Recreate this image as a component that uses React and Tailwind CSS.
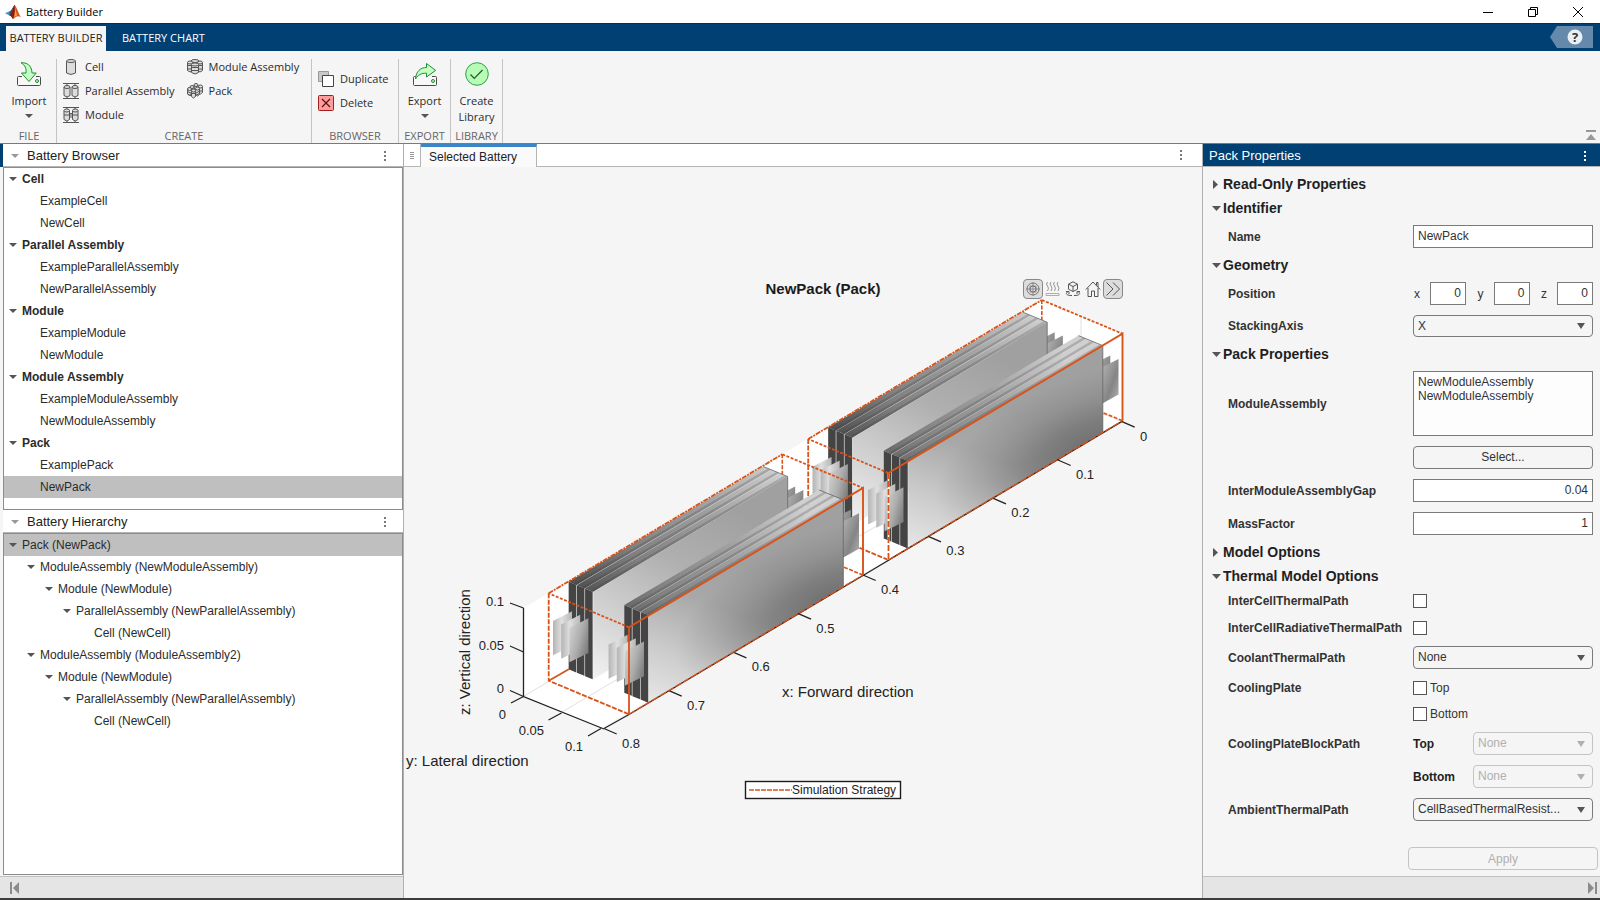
import React from 'react';

const ui = "font-['Open_Sans',sans-serif]";

/* ---------- icons ---------- */

const MatlabLogo = () => (
  <svg width="16" height="16" viewBox="0 0 16 16" aria-hidden="true">
    <path d="M0 9.2 L4.6 7.2 L6.6 9 L4.4 11.4Z" fill="#3f9bc4" />
    <path d="M4.6 7.2 C6.5 6.6 7.4 3.6 9 1.4 L8 8.2 L4.4 11.4Z" fill="#27597f" />
    <path d="M9.4 .8 C8.4 2.4 7.6 6.8 4.4 11.4 C6.2 11 7 14 8 15 C10 14.6 10.6 10.8 15.8 13 C13.4 9.6 11.4 2 9.4 .8Z" fill="#d8531c" />
    <path d="M9.4 .8 C10 4.4 10.2 8 8 15 C6.8 14 6.4 11.4 4.4 11.4 C7.4 7.6 8.2 3 9.4 .8Z" fill="#7c2018" />
    <path d="M9.6 1.2 C10.4 5 11.4 9.6 12.2 11.6 C11 11.6 10 12.6 9.2 13.6 C10.2 9.4 10.4 5 9.6 1.2Z" fill="#f5a13a" />
  </svg>
);

const Drive = () => (
  <>
    <path d="M5 14.5H1.5a1 1 0 0 0-1 1V22.500a1 1 0 0 0 1 1h21a1 1 0 0 0 1-1v-7a1 1 0 0 0-1-1H19" fill="#f8f8f8" stroke="#4a4a4a" />
    <circle cx="20" cy="19" r="1.5" fill="#b9f7b9" stroke="#2a8a3a" />
  </>
);

const ImportIcon = () => (
  <svg width="24" height="24" viewBox="0 0 24 24" fill="none" aria-hidden="true">
    <Drive />
    <path d="M4 .8C9.500 .3 14.800 3 15 11h4.200L12 19.600 4.500 11H9C9.600 6.500 8 3 4 .8Z" fill="#c3ffc3" stroke="#1f8f35" strokeLinejoin="round" />
  </svg>
);

const ExportIcon = () => (
  <svg width="24" height="24" viewBox="0 0 24 24" fill="none" aria-hidden="true">
    <Drive />
    <path d="M2.500 17C3 9.500 7.500 5.500 13.500 5.500V1.500L22.600 8.400 13.500 15V11.200C8.500 11 5 12.800 2.500 17Z" fill="#c3ffc3" stroke="#1f8f35" strokeLinejoin="round" />
  </svg>
);

const LibraryIcon = () => (
  <svg width="24" height="24" viewBox="0 0 24 24" fill="none" aria-hidden="true">
    <circle cx="12" cy="12" r="11.300" fill="#b6fbb6" stroke="#2fa048" />
    <path d="M5.500 12.500l3.800 4 8.200-8.500" stroke="#1d5c2c" strokeWidth="1.200" />
  </svg>
);

const Can = ({ x, y, w, h }) => (
  <g>
    <path d={`M${x} ${y + 1.500}v${h - 3}q${w / 2} 3 ${w} 0v-${h - 3}`} />
    <ellipse cx={x + w / 2} cy={y + 1.500} rx={w / 2} ry="1.500" />
  </g>
);

const CreateSvg = ({ children }) => (
  <svg width="16" height="16" viewBox="0 0 16 16" fill="#dcdcdc" stroke="#555" strokeWidth="1" aria-hidden="true">
    {children}
  </svg>
);

const CellIcon = () => <CreateSvg><Can x={3.5} y={0.5} w={9} h={15} /></CreateSvg>;
const ParallelIcon = () => (
  <CreateSvg>
    <path d="M0 .5h16M0 15.500h16M4 .5v2M12 .5v2M4 13v2M12 13v2" />
    <Can x={1} y={2.5} w={6} h={11.5} /><Can x={9} y={2.5} w={6} h={11.5} />
  </CreateSvg>
);
const ModuleIcon = () => (
  <CreateSvg>
    <path d="M0 .5h16M0 15.500h16M4 .5v2M12 .5v2M4 13v2M12 13v2" />
    <Can x={1} y={2} w={5.5} h={12} /><Can x={9.5} y={2} w={5.5} h={12} />
    <path d="M1 8h14M6.500 6.500h3M6.500 10h3" />
  </CreateSvg>
);
const AssemblyIcon = () => (
  <CreateSvg>
    <Can x={4} y={0.5} w={8} h={6} />
    <Can x={0.5} y={2} w={5} h={11} /><Can x={10.5} y={2} w={5} h={11} />
    <Can x={4.5} y={4} w={7} h={11} />
    <path d="M.5 6.500h4M11.500 6.500h4M.5 10h4M11.500 10h4M4.500 8.500h7M4.500 11.500h7" fill="none" />
  </CreateSvg>
);
const PackIcon = () => (
  <CreateSvg>
    <Can x={7} y={0.5} w={4} h={7} /><Can x={11.5} y={2} w={4} h={9} /><Can x={3} y={2.5} w={4} h={7} />
    <Can x={0.5} y={4.5} w={4} h={8} /><Can x={8.5} y={4} w={4} h={9} /><Can x={4.5} y={6} w={4} h={9} />
    <path d="M.5 8.500l4 2h4l4-2.500h3M.5 11l4 2M8.500 12.500l4-2" fill="none" />
  </CreateSvg>
);
const DuplicateIcon = () => (
  <svg width="16" height="16" viewBox="0 0 16 16" aria-hidden="true">
    <path d="M.5 .5h10v10H.5z" fill="#c8c8c8" stroke="#999" />
    <path d="M4.500 4.500h11v11h-11z" fill="#fff" stroke="#444" />
  </svg>
);
const DeleteIcon = () => (
  <svg width="16" height="16" viewBox="0 0 16 16" aria-hidden="true">
    <rect x=".5" y=".5" width="15" height="15" rx="1" fill="#ff9c9c" stroke="#a11f1f" />
    <path d="M4 4l8 8M12 4l-8 8" stroke="#5a1010" strokeWidth="1.200" />
  </svg>
);

const Down = ({ className = 'text-[#555]' }) => (
  <svg width="8" height="4" viewBox="0 0 8 4" className={`shrink-0 ${className}`} aria-hidden="true">
    <path d="M0 0h8L4 4z" fill="currentColor" />
  </svg>
);
const Dots = ({ className = 'text-[#777]' }) => (
  <svg width="2" height="12" viewBox="0 0 2 12" className={className} aria-hidden="true">
    <path d="M0 1h2v2H0zM0 5h2v2H0zM0 9h2v2H0z" fill="currentColor" />
  </svg>
);

/* ---------- window frame ---------- */

function TitleBar() {
  return (
    <header className={`flex h-[23px] shrink-0 items-center bg-white pl-[5px] text-[11px] text-black ${ui}`}>
      <MatlabLogo />
      <h1 className="ml-[5px] grow text-[11px] leading-4">Battery Builder</h1>
      <div className="flex items-center">
        <button aria-label="Minimize" className="flex w-[45px] justify-center">
          <svg width="10" height="10" viewBox="0 0 10 10"><path d="M0 5.500h10" stroke="#000" /></svg>
        </button>
        <button aria-label="Restore" className="flex w-[45px] justify-center">
          <svg width="10" height="10" viewBox="0 0 10 10" fill="none" stroke="#000"><path d="M.5 2.500h7v7h-7zM2.500 2.500v-2h7v7h-2" /></svg>
        </button>
        <button aria-label="Close" className="flex w-[45px] justify-center">
          <svg width="10" height="10" viewBox="0 0 10 10"><path d="M0 0l10 10M10 0L0 10" stroke="#000" /></svg>
        </button>
      </div>
    </header>
  );
}

function TabBar() {
  return (
    <nav className={`flex h-7 shrink-0 items-end border-t border-[#0b2f4d] bg-[#004072] pl-[6px] text-[11px] ${ui}`}>
      <button className="h-[25px] w-[100px] whitespace-nowrap bg-[#f5f5f5] text-center text-[#222]">BATTERY BUILDER</button>
      <button className="ml-3 h-[25px] px-1 text-white">BATTERY CHART</button>
      <button aria-label="Help" className="mb-[3px] ml-auto mr-[7px]">
        <svg width="43" height="22" viewBox="0 0 43 22">
          <path d="M7 0h36v22H7L0 11z" fill="#6489ab" />
          <circle cx="25" cy="11" r="7.500" fill="#e9f0f5" />
          <text x="25" y="16" textAnchor="middle" fontSize="13" fontWeight="bold" fontFamily="Open Sans" fill="#333">?</text>
        </svg>
      </button>
    </nav>
  );
}

const StripGroup = ({ label, className, children }) => (
  <section className={`mt-2 flex flex-col border-r border-[#c4c4c4] ${className}`}>
    <div className="grow">{children}</div>
    <div className="text-center text-[11px] leading-[14px] text-[#666]">{label}</div>
  </section>
);
const SmallTool = ({ icon, label }) => (
  <button className="flex h-6 items-center gap-[6px] whitespace-nowrap">{icon}<span className="pt-px">{label}</span></button>
);
const BigTool = ({ icon, label, menu }) => (
  <button className="flex w-full flex-col items-center pt-[3px] leading-4">
    {icon}
    <span className="mt-[7px]">{label}</span>
    {menu && <Down className="mt-[5px] text-[#555]" />}
  </button>
);

function Toolstrip() {
  return (
    <div className={`flex h-[93px] shrink-0 border-b border-[#7a7a7a] bg-[#f5f5f5] text-[11px] text-[#2b2b2b] ${ui}`}>
      <StripGroup label="FILE" className="w-[57px] pl-[2px]"><BigTool icon={<ImportIcon />} label="Import" menu /></StripGroup>
      <StripGroup label="CREATE" className="w-[255px]">
        <div className="-mt-1 flex gap-3 pl-[6px]">
          <div><SmallTool icon={<CellIcon />} label="Cell" /><SmallTool icon={<ParallelIcon />} label="Parallel Assembly" /><SmallTool icon={<ModuleIcon />} label="Module" /></div>
          <div><SmallTool icon={<AssemblyIcon />} label="Module Assembly" /><SmallTool icon={<PackIcon />} label="Pack" /></div>
        </div>
      </StripGroup>
      <StripGroup label="BROWSER" className="w-[87px]">
        <div className="pl-[6px] pt-2"><SmallTool icon={<DuplicateIcon />} label="Duplicate" /><SmallTool icon={<DeleteIcon />} label="Delete" /></div>
      </StripGroup>
      <StripGroup label="EXPORT" className="w-[52px]"><BigTool icon={<ExportIcon />} label="Export" menu /></StripGroup>
      <StripGroup label="LIBRARY" className="w-[52px]"><BigTool icon={<LibraryIcon />} label={<>Create<br />Library</>} /></StripGroup>
      <button aria-label="Collapse toolstrip" className="mb-[3px] ml-auto mr-[4px] self-end">
        <svg width="10" height="10" viewBox="0 0 10 10"><path d="M0 0h10v2H0zM5 4l5 6H0z" fill="#999" /></svg>
      </button>
    </div>
  );
}

/* ---------- left side ---------- */

const PanelHeader = ({ title }) => (
  <div className="flex h-[23px] shrink-0 items-center border-b border-[#b5b5b5] bg-white pl-2 pr-[17px] pt-px text-[13px] text-[#222]">
    <Down className="text-[#999]" />
    <h2 className="ml-2 grow">{title}</h2>
    <button aria-label={`${title} menu`}><Dots /></button>
  </div>
);

const indent = ['pl-[5px]', 'pl-[23px]', 'pl-[41px]', 'pl-[59px]', 'pl-[77px]'];

const Row = ({ depth, label, open, bold, selected }) => (
  <li role="treeitem" aria-selected={!!selected} className={`flex h-[22px] items-center text-[12px] ${indent[depth]} ${bold ? 'font-bold' : ''} ${selected ? 'bg-[#bfbfbf]' : ''}`}>
    {open ? <Down /> : <span className="w-2" />}
    <span className="ml-[5px]">{label}</span>
  </li>
);

const browser = [
  ['Cell', 'ExampleCell', 'NewCell'],
  ['Parallel Assembly', 'ExampleParallelAssembly', 'NewParallelAssembly'],
  ['Module', 'ExampleModule', 'NewModule'],
  ['Module Assembly', 'ExampleModuleAssembly', 'NewModuleAssembly'],
  ['Pack', 'ExamplePack', 'NewPack'],
];
const hierarchy = [
  [0, 'Pack (NewPack)'],
  [1, 'ModuleAssembly (NewModuleAssembly)'], [2, 'Module (NewModule)'], [3, 'ParallelAssembly (NewParallelAssembly)'], [4, 'Cell (NewCell)'],
  [1, 'ModuleAssembly (ModuleAssembly2)'], [2, 'Module (NewModule)'], [3, 'ParallelAssembly (NewParallelAssembly)'], [4, 'Cell (NewCell)'],
];

function LeftSide() {
  return (
    <aside className="flex w-[404px] shrink-0 flex-col border-r border-[#b0b0b0] text-[#2b2b2b]">
      <div className="border-l-[3px] border-[#004072]"><PanelHeader title="Battery Browser" /></div>
      <ul role="tree" aria-label="Battery Browser" className="ml-[3px] h-[343px] shrink-0 border border-[#8c8c8c] bg-white">
        {browser.map(([group, ...items]) => (
          <React.Fragment key={group}>
            <Row depth={0} label={group} open bold />
            {items.map((i) => <Row key={i} depth={1} label={i} selected={i === 'NewPack'} />)}
          </React.Fragment>
        ))}
      </ul>
      <div className="ml-[3px]"><PanelHeader title="Battery Hierarchy" /></div>
      <ul role="tree" aria-label="Battery Hierarchy" className="mb-px ml-[3px] grow border border-[#8c8c8c] bg-white">
        {hierarchy.map(([d, l], i) => <Row key={i} depth={d} label={l} open={d < 4} selected={i === 0} />)}
      </ul>
      <div className="flex h-[22px] shrink-0 items-center border-t border-[#c0c0c0] bg-[#e5e5e5] pl-[10px] pt-px">
        <button aria-label="Collapse left side">
          <svg width="9" height="12" viewBox="0 0 9 12"><path d="M0 0h2v12H0zM9 0v12L3 6z" fill="#8c8c8c" /></svg>
        </button>
      </div>
    </aside>
  );
}

/* ---------- chart ---------- */

const pts = (list) => list.map((p) => p.join(',')).join(' ');
const shift = (list, dx, dy) => list.map(([x, y]) => [x + dx, y + dy]);

/* Three pouch cells stacked side by side, with a tab at each end. */
function CellStack({ dx, dy, face, shaded }) {
  const n = [0, 1, 2];
  const s = (l, i = 0) => pts(shift(l, dx + i * 8.2, dy + i * 3.45));
  return (
    <g>
      {n.map((i) => (
        <polygon key={i} points={s([[770, 491.5], [787, 483], [787, 518.5], [770, 528]], i)} fill="url(#tabR)" />
      ))}
      <polygon points={s([[568.7, 581.7], [593.3, 592], [593.3, 679.3], [568.7, 669.3]])} fill="#e0e0e0" />
      {n.map((i) => (
        <polygon key={i} points={s([[568.7, 581.7], [576.2, 584.8], [576.2, 672.4], [568.7, 669.3]], i)} fill="#444" />
      ))}
      {n.map((i) => (
        <g key={i}>
          <polygon points={s([[568.7, 581.7], [576.9, 585.2], [771.3, 469.9], [763.3, 466.5]], i)} fill="url(#top)" />
          <polygon points={s([[573.5, 583.8], [576.9, 585.2], [771.3, 469.9], [768, 468.5]], i)} fill="#333" opacity=".22" />
          <path d={`M${576.9 + dx + i * 8.2} ${585.2 + dy + i * 3.45}l194.400 -115.300`} stroke="#d6d6d6" strokeWidth=".8" />
        </g>
      ))}
      <polygon points={s([[593.3, 592], [787.7, 476.3], [787.7, 563], [593.3, 679.3]])} fill={face} />
      {shaded && <polygon points={s([[593.3, 592], [787.7, 476.3], [787.7, 563], [593.3, 679.3]])} fill="url(#shade)" />}
      <path d={`M${763.3 + dx} ${466.5 + dy}l24.400 10v86.500`} fill="none" stroke="#666" strokeWidth=".8" />
      {n.map((i) => (
        <polygon key={i} points={s([[553, 621], [572, 611.3], [572, 646], [553, 655.3]], i)} fill={i === 2 ? 'url(#tabF)' : 'url(#tabL)'} />
      ))}
    </g>
  );
}

/* One module assembly: the enclosing box edges and two cell stacks. */
function Assembly({ leftDash }) {
  return (
    <g>
      <g fill="none" stroke="#d95319" strokeWidth="1.600">
        <path d="M782.300 454.300V542M863 575L782.300 542" strokeDasharray="4 1.500" />
        <path d="M548.700 680.700L570 668.500" />
      </g>
      <CellStack dx={0} dy={0} face="url(#rear)" />
      <CellStack dx={55.6} dy={23.4} face="url(#front)" shaded />
      <path d="M629 714.500L863 575.500" stroke="#3a2018" strokeWidth="1.400" />
      <g fill="none" stroke="#d95319" strokeWidth="1.800">
        <path d="M548.700 593.300L782.300 454.300" strokeDasharray="5 1 2 1" />
        <path d="M782.300 454.300L863 488M629 627.300L548.700 593.300" strokeDasharray="3 1.500" />
        <path d="M548.700 593.300V680.700L629 714.300" strokeDasharray="5 1.500" />
        {leftDash && <path d="M629 627.300V714.300" stroke="#fff" />}
        <path d="M629 627.300V714.300" strokeDasharray={leftDash ? '6 2' : undefined} />
        <path d="M629 627.300L863 488V575" strokeWidth="1.900" />
        <path d="M629 714.300L863 575" strokeDasharray="7 2" strokeWidth="1.300" />
      </g>
    </g>
  );
}

const xTicks = [['0', 1122, 421.7], ['0.1', 1058, 460], ['0.2', 993.3, 498.3], ['0.3', 928.3, 536.3], ['0.4', 863, 575], ['0.5', 798.3, 613.7], ['0.6', 733.7, 652.3], ['0.7', 669, 690.7], ['0.8', 604, 728.5]];

function BatteryChart() {
  return (
    <svg viewBox="404 167 798 731" className="block h-full w-full" role="img" aria-label="NewPack (Pack)" fontFamily="Liberation Sans, sans-serif">
      <defs>
        <linearGradient id="top" gradientUnits="userSpaceOnUse" x1="570" y1="590" x2="780" y2="465">
          <stop offset="0" stopColor="#4c4c4c" /><stop offset=".3" stopColor="#808080" /><stop offset=".65" stopColor="#a0a0a0" /><stop offset="1" stopColor="#d0d0d0" />
        </linearGradient>
        <linearGradient id="rear" gradientUnits="userSpaceOnUse" x1="595" y1="680" x2="700" y2="490">
          <stop offset="0" stopColor="#f2f2f2" /><stop offset=".3" stopColor="#d2d2d2" /><stop offset=".65" stopColor="#b0b0b0" /><stop offset="1" stopColor="#a0a0a0" />
        </linearGradient>
        <linearGradient id="front" gradientUnits="userSpaceOnUse" x1="665" y1="712" x2="725" y2="555">
          <stop offset="0" stopColor="#e8e8e8" /><stop offset=".35" stopColor="#cbcbcb" /><stop offset=".7" stopColor="#a8a8a8" /><stop offset="1" stopColor="#a0a0a0" />
        </linearGradient>
        <radialGradient id="shade" gradientUnits="userSpaceOnUse" cx="0" cy="0" r="1" gradientTransform="translate(830 602) rotate(-22) scale(165 72)">
          <stop offset="0" stopColor="#585858" stopOpacity=".7" /><stop offset=".35" stopColor="#606060" stopOpacity=".52" /><stop offset=".7" stopColor="#6c6c6c" stopOpacity=".22" /><stop offset="1" stopColor="#707070" stopOpacity="0" />
        </radialGradient>
        <linearGradient id="tabL"><stop offset="0" stopColor="#b4b4b4" /><stop offset=".45" stopColor="#e0e0e0" /><stop offset="1" stopColor="#b8b8b8" /></linearGradient>
        <linearGradient id="tabF" x1="0" y1="0" x2="1" y2=".6"><stop offset="0" stopColor="#d8d8d8" /><stop offset=".6" stopColor="#adadad" /><stop offset="1" stopColor="#808080" /></linearGradient>
        <linearGradient id="tabR" x1="0" y1="0" x2="1" y2="1"><stop offset="0" stopColor="#b8b8b8" /><stop offset=".6" stopColor="#858585" /><stop offset="1" stopColor="#b4b4b4" /></linearGradient>
      </defs>

      <text x="823" y="294" textAnchor="middle" fontSize="15" fontWeight="bold" fill="#1c1c1c">NewPack (Pack)</text>

      <polygon points="523.500,608 1041.700,300 1122,334 1122,421.700 601,728 523.500,696.500" fill="#fff" />
      <path d="M523.500 696.500L1041.700 388L1122 421.700M562 712L1081 405V317" fill="none" stroke="#e6dede" />

      <g transform="translate(259.500 -154.300)"><Assembly leftDash /></g>
      <g stroke="#222" strokeWidth="1.300" fill="none">
        <path d="M889 560L863 575.500M629 714.500L604 728.500" />
        <path d="M523.500 608V696.500L604 729" />
        <path d="M510 603l13.500 5M510 646l13.500 6M510 690.500l13.500 6M511 703l12.500-6.500M548.500 720l13-7M588 736l13-7.500" />
        {xTicks.map(([t, x, y]) => <path key={t} d={`M${x} ${y}l12.700 5.500`} />)}
      </g>
      <Assembly />

      <g fontSize="13" fill="#222">
        {xTicks.map(([t, x, y]) => <text key={t} x={x + 18} y={y + 19}>{t}</text>)}
        <g textAnchor="end">
          <text x="504" y="606">0.1</text><text x="504" y="650">0.05</text><text x="504" y="693">0</text>
          <text x="506" y="719">0</text><text x="544" y="735">0.05</text><text x="583" y="751">0.1</text>
        </g>
      </g>
      <g fontSize="15" fill="#222">
        <text x="782" y="697">x: Forward direction</text>
        <text x="406" y="766">y: Lateral direction</text>
        <text transform="translate(470 715) rotate(-90)">z: Vertical direction</text>
      </g>
      <rect x="745.500" y="781.500" width="155" height="17" fill="#fff" stroke="#1c1c1c" strokeWidth="1.400" />
      <path d="M749 790h43" stroke="#d95319" strokeWidth="1.300" strokeDasharray="5 1" />
      <text x="792" y="794" fontSize="12" fill="#222">Simulation Strategy</text>
    </svg>
  );
}

const AxesButton = ({ label, active, children }) => (
  <button aria-label={label} className={`flex size-5 items-center justify-center rounded ${active ? 'border border-[#888] bg-[#dcdcdc]' : ''}`}>
    <svg width="16" height="16" viewBox="0 0 16 16" fill="none" stroke="#555">{children}</svg>
  </button>
);

function Center() {
  return (
    <main className="flex min-w-0 grow flex-col">
      <div className="flex h-[23px] shrink-0 items-stretch border-b border-[#b5b5b5] bg-white">
        <div className="flex w-[17px] shrink-0 items-center justify-center border-r border-[#b5b5b5]">
          <svg width="4" height="7" viewBox="0 0 4 7"><path d="M0 .5h4M0 2.500h4M0 4.500h4M0 6.500h4" stroke="#999" /></svg>
        </div>
        <button className="-mb-px h-[23px] w-[116px] border-r border-t-[3px] border-r-[#b5b5b5] border-t-[#3a86c8] bg-[#fafafa] pl-2 text-left text-[12px] text-[#222]">Selected Battery</button>
        <button aria-label="Selected Battery menu" className="ml-auto mr-5"><Dots /></button>
      </div>
      <div className="relative min-h-0 grow">
        <BatteryChart />
        <div className="absolute right-[79px] top-[112px] flex">
          <AxesButton label="Data tips" active>
            <circle cx="8" cy="8" r="6" stroke="#777" /><circle cx="8" cy="8" r="3" stroke="#777" /><path d="M8 1v14M1 8h14M5 5h6v6H5z" strokeWidth=".7" stroke="#777" />
          </AxesButton>
          <AxesButton label="Heat">
            <path d="M2.500 1q-2 2 0 4t0 5M6 1q-2 2 0 4t0 5M9.500 1q-2 2 0 4t0 5M13 1q-2 2 0 4t0 5" stroke="#888" strokeWidth=".9" /><path d="M1 12.500h13v2H1z" stroke="#b8a8a8" />
          </AxesButton>
          <AxesButton label="Rotate 3D">
            <path d="M8 .8l4.500 2.400v5L8 10.500 3.500 8.200v-5zM3.500 3.200L8 5.500l4.500-2.300M8 5.500v5" /><path d="M3.500 10.500C-.5 12 1.500 14.500 6 14.500h1M12.500 10.500c4 1.500 2 4-2.500 4H9M1 10.500h3v2.500M15 10.500h-3v2.500" />
          </AxesButton>
          <AxesButton label="Restore view">
            <path d="M.8 8.500L8 1l7.200 7.500M3 7v8.500h3.500V10h3v5.500H13V7M11.500 4V1.500h1.500V6" />
          </AxesButton>
          <AxesButton label="More" active>
            <path d="M1.500 1.500L8 8l-6.500 6.500M8 1.500L14.500 8 8 14.500" />
          </AxesButton>
        </div>
      </div>
    </main>
  );
}

/* ---------- properties ---------- */

const Section = ({ title, open = true, children }) => (
  <section>
    <h3 className="text-[14px] font-bold leading-6 text-[#1f1f1f]">
      <button className="flex items-center pl-[9px]">
        <span className="flex w-[11px] items-center">
          {open ? (
            <svg width="9" height="5" viewBox="0 0 9 5"><path d="M0 0h9L4.500 5z" fill="#555" /></svg>
          ) : (
            <svg width="7" height="9" viewBox="0 0 7 9"><path d="M1 0l5 4.500L1 9z" fill="#555" /></svg>
          )}
        </span>
        {title}
      </button>
    </h3>
    {children && <div className="flex flex-col gap-[10px] py-[5px] pl-[25px] pr-[7px] text-[12px]">{children}</div>}
  </section>
);

const Field = ({ label, id, children }) => (
  <div className="flex items-center">
    {id ? <label htmlFor={id} className="w-[185px] shrink-0 font-bold">{label}</label> : <span className="w-[185px] shrink-0 font-bold">{label}</span>}
    {children}
  </div>
);

const box = 'h-[23px] border border-[#7a7a7a] bg-white pb-px text-[12px] text-[#333]';

const Pick = ({ id, value, disabled, label, className = 'h-[23px]' }) => (
  <span className={`relative flex min-w-0 grow items-center ${disabled ? 'text-[#b0b0b0]' : 'text-[#555]'}`}>
    <select id={id} aria-label={label} disabled={disabled} defaultValue={value} className={`w-full appearance-none rounded border bg-[#f5f5f5] pb-px pl-1 pr-7 text-[12px] ${className} ${disabled ? 'border-[#c4c4c4] text-[#b0b0b0]' : 'border-[#7a7a7a] text-[#333]'}`}>
      <option>{value}</option>
    </select>
    <svg width="8" height="6" viewBox="0 0 8 6" className="pointer-events-none absolute right-2" aria-hidden="true"><path d="M0 0h8L4 6z" fill="currentColor" /></svg>
  </span>
);

const Tick = ({ id }) => <input id={id} type="checkbox" className="size-[14px] appearance-none border border-[#555] bg-white" />;

function Properties() {
  return (
    <aside className="flex w-[398px] shrink-0 flex-col border-l border-[#b0b0b0] bg-[#f5f5f5] text-[#333]">
      <div className="flex h-[23px] shrink-0 items-center border-b border-[#b5b5b5] bg-[#004072] pl-[6px] pr-[14px] pt-px text-[13px] text-white">
        <h2 className="grow">Pack Properties</h2>
        <button aria-label="Pack Properties menu"><Dots className="text-white" /></button>
      </div>
      <form className="flex min-h-0 grow flex-col pt-[5px]" onSubmit={(e) => e.preventDefault()}>
        <Section title="Read-Only Properties" open={false} />
        <Section title="Identifier">
          <Field label="Name" id="name"><input id="name" defaultValue="NewPack" className={`w-0 grow px-1 ${box}`} /></Field>
        </Section>
        <Section title="Geometry">
          <Field label="Position">
            <div className="flex grow items-center justify-between">
              {['x', 'y', 'z'].map((a) => (
                <label key={a} className="flex items-center"><span className="w-[17px] pl-px">{a}</span><input defaultValue="0" className={`w-9 px-1 text-right ${box}`} /></label>
              ))}
            </div>
          </Field>
          <Field label="StackingAxis" id="axis"><Pick id="axis" value="X" className="h-[22px]" /></Field>
        </Section>
        <Section title="Pack Properties">
          <Field label="ModuleAssembly" id="ma">
            <textarea id="ma" readOnly defaultValue={'NewModuleAssembly\nNewModuleAssembly'} className="h-[65px] w-0 grow resize-none border border-[#7a7a7a] bg-[#fdfdfd] px-1 py-[3px] text-[12px] leading-[14px]" />
          </Field>
          <button type="button" className="ml-[185px] h-[23px] rounded border border-[#7a7a7a] pb-px">Select...</button>
          <Field label="InterModuleAssemblyGap" id="gap"><input id="gap" defaultValue="0.04" className={`w-0 grow px-1 text-right ${box}`} /></Field>
          <Field label="MassFactor" id="mass"><input id="mass" defaultValue="1" className={`w-0 grow px-1 text-right ${box}`} /></Field>
        </Section>
        <Section title="Model Options" open={false} />
        <Section title="Thermal Model Options">
          <div className="flex h-4 items-center"><Field label="InterCellThermalPath" id="ict"><Tick id="ict" /></Field></div>
          <div className="flex h-[17px] items-center"><Field label="InterCellRadiativeThermalPath" id="icr"><Tick id="icr" /></Field></div>
          <Field label="CoolantThermalPath" id="coolant"><Pick id="coolant" value="None" /></Field>
          <div className="flex h-[17px] items-center"><Field label="CoolingPlate"><label className="flex items-center gap-[3px]"><Tick />Top</label></Field></div>
          <label className="ml-[185px] flex h-4 items-center gap-[3px]"><Tick />Bottom</label>
          <Field label="CoolingPlateBlockPath">
            <label htmlFor="bt" className="w-[60px] shrink-0 font-bold text-[#1f1f1f]">Top</label><Pick id="bt" value="None" disabled />
          </Field>
          <div className="ml-[185px] flex items-center">
            <label htmlFor="bb" className="w-[60px] shrink-0 font-bold text-[#1f1f1f]">Bottom</label><Pick id="bb" value="None" disabled />
          </div>
          <Field label="AmbientThermalPath" id="amb"><Pick id="amb" value="CellBasedThermalResist..." /></Field>
        </Section>
        <button disabled className="mb-[6px] mr-[2px] mt-auto h-[23px] w-[190px] self-end rounded border border-[#c4c4c4] text-[12px] text-[#b0b0b0]">Apply</button>
      </form>
      <div className="flex h-[22px] shrink-0 items-center justify-end border-t border-[#c0c0c0] bg-[#e5e5e5] pr-[3px] pt-px">
        <button aria-label="Collapse right side">
          <svg width="9" height="12" viewBox="0 0 9 12"><path d="M7 0h2v12H7zM0 0v12L6 6z" fill="#8c8c8c" /></svg>
        </button>
      </div>
    </aside>
  );
}

export default function App() {
  return (
    <div className="flex h-screen min-h-[900px] flex-col border-b-2 border-[#3c3c3c] bg-[#f5f5f5] font-['Liberation_Sans',Arial,sans-serif]">
      <TitleBar />
      <TabBar />
      <Toolstrip />
      <div className="flex min-h-0 grow">
        <LeftSide />
        <Center />
        <Properties />
      </div>
    </div>
  );
}
